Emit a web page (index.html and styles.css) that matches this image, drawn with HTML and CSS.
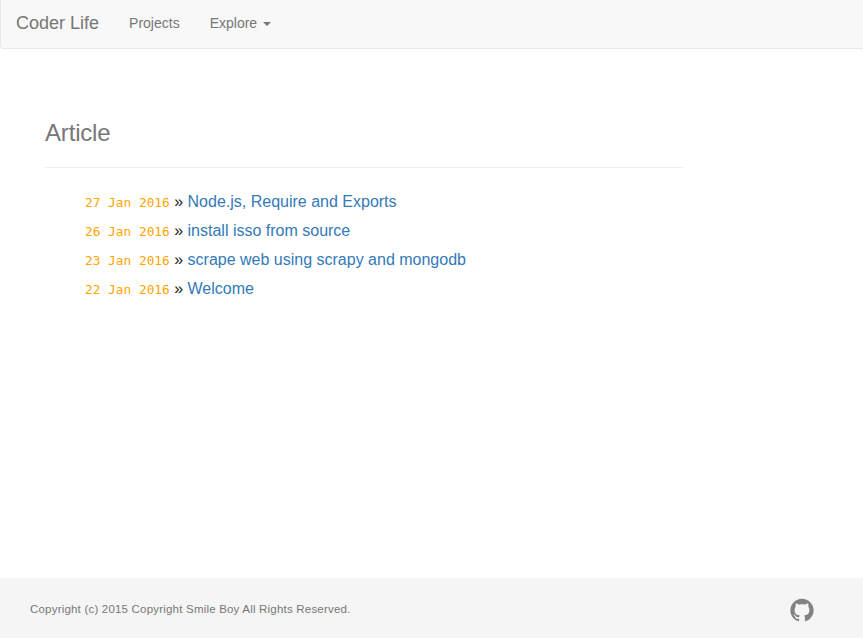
FILE: index.html
```html
<!DOCTYPE html>
<html lang="en">
<head>
<meta charset="utf-8">
<title>Coder Life</title>
<link rel="stylesheet" href="styles.css">
</head>
<body>
<nav class="navbar">
  <a class="brand" href="#">Coder Life</a>
  <a class="nav-link" href="#">Projects</a>
  <a class="nav-link" href="#">Explore <span class="caret"></span></a>
</nav>
<main class="content">
  <h1 class="title">Article</h1>
  <ul class="posts">
    <li><span class="date">27 Jan 2016</span> » <a href="#">Node.js, Require and Exports</a></li>
    <li><span class="date">26 Jan 2016</span> » <a href="#">install isso from source</a></li>
    <li><span class="date">23 Jan 2016</span> » <a href="#">scrape web using scrapy and mongodb</a></li>
    <li><span class="date">22 Jan 2016</span> » <a href="#">Welcome</a></li>
  </ul>
</main>
<footer class="footer">
  <p class="copyright">Copyright (c) 2015 Copyright Smile Boy All Rights Reserved.</p>
  <a class="github" href="#" aria-label="GitHub"><svg viewBox="0 0 16 16" width="24" height="24"><path fill="#828282" d="M7.999,0.431c-4.285,0-7.76,3.474-7.76,7.761 c0,3.428,2.223,6.337,5.307,7.363c0.388,0.071,0.53-0.168,0.53-0.374c0-0.184-0.007-0.672-0.01-1.32 c-2.159,0.469-2.614-1.04-2.614-1.04c-0.353-0.896-0.862-1.135-0.862-1.135c-0.705-0.481,0.053-0.472,0.053-0.472 c0.779,0.055,1.189,0.8,1.189,0.8c0.692,1.186,1.816,0.843,2.258,0.645c0.071-0.502,0.271-0.843,0.493-1.037 C4.86,11.425,3.049,10.76,3.049,7.786c0-0.847,0.302-1.54,0.799-2.082C3.768,5.507,3.501,4.718,3.924,3.65 c0,0,0.652-0.209,2.134,0.796C6.677,4.273,7.34,4.187,8,4.184c0.659,0.003,1.323,0.089,1.943,0.261 c1.482-1.004,2.132-0.796,2.132-0.796c0.423,1.068,0.157,1.857,0.077,2.054c0.497,0.542,0.798,1.235,0.798,2.082 c0,2.981-1.814,3.637-3.543,3.829c0.279,0.24,0.527,0.713,0.527,1.437c0,1.037-0.01,1.874-0.01,2.129 c0,0.208,0.14,0.449,0.534,0.373c3.081-1.028,5.302-3.935,5.302-7.362C15.76,3.906,12.285,0.431,7.999,0.431z"/></svg></a>
</footer>
</body>
</html>
```
FILE: styles.css
```css
* { box-sizing: border-box; }
body {
  margin: 0;
  min-height: 100vh;
  display: flex;
  flex-direction: column;
  overflow: hidden;
  background: #fff;
  color: #222;
  font: 16px/1.42857 "Liberation Sans", Arial, sans-serif;
}
a { color: #337ab7; text-decoration: none; }
.navbar {
  display: flex;
  height: 49px;
  margin-right: -5px;
  border: 1px solid #e7e7e7;
  border-top: 0;
  border-radius: 0 0 4px 4px;
  background: #f8f8f8;
}
.navbar a { padding: 13px 15px 15px; color: #777; line-height: 20px; }
.navbar .brand { font-size: 18px; }
.navbar .nav-link { font-size: 14px; }
.caret {
  display: inline-block;
  margin-left: 2px;
  vertical-align: middle;
  border-top: 4px solid;
  border-right: 4px solid transparent;
  border-left: 4px solid transparent;
}
.content { flex: 1; width: 683px; padding: 71px 0 0 45px; }
.title {
  height: 48px;
  margin: 0 0 19px;
  border-bottom: 1px solid #eee;
  color: #777;
  font-size: 24px;
  letter-spacing: -0.18px;
  font-weight: 400;
  line-height: 26px;
}
.posts { margin: 0; padding: 0 0 0 40px; list-style: none; }
.posts li { line-height: 29px; }
.date { color: orange; font: 12.8px "DejaVu Sans Mono", monospace; }
.footer {
  display: flex;
  justify-content: space-between;
  align-items: center;
  height: 60px;
  padding: 4px 49px 0 30px;
  background: #f5f5f5;
}
.copyright { margin: 0 0 2px; color: #777; font-size: 11.5px; letter-spacing: 0.2px; line-height: 16px; }
.github { display: flex; }
```
